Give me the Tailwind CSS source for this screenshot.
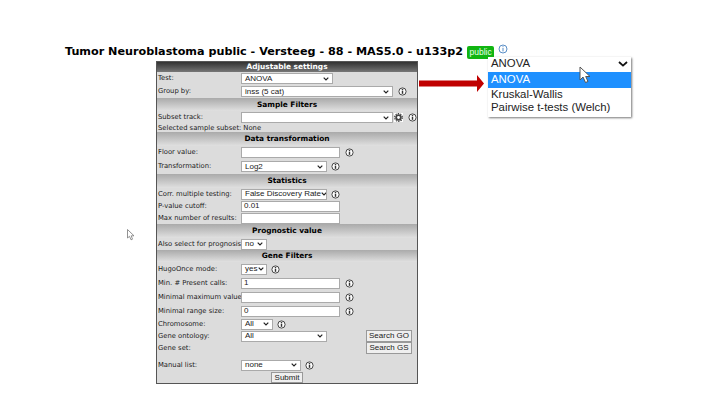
<!DOCTYPE html>
<html>
<head>
<meta charset="utf-8">
<script src="https://cdn.jsdelivr.net/npm/@tailwindcss/browser@4"></script>
</head>
<body class="bg-white overflow-hidden">
<div class="relative w-[720px] h-[416px] overflow-hidden font-['DejaVu_Sans',sans-serif] text-[6.8px] text-[#222]">

  <!-- Title line -->
  <div class="flex items-center h-[16px] mt-[44px] pl-[65px] absolute top-0 left-0">
    <span class="font-bold text-[11.2px] text-black whitespace-nowrap">Tumor Neuroblastoma public - Versteeg - 88 - MAS5.0 - u133p2</span>
    <span class="ml-[4px] bg-[#11b511] text-[#e8ffe8] rounded-[2px] w-[27px] text-center h-[13px] leading-[13px] text-[8.5px] font-['Liberation_Sans',sans-serif]">public</span>
    <svg class="ml-[4px] -mt-[6px]" width="10" height="10" viewBox="0 0 10 10"><circle cx="5" cy="5" r="4" fill="#fff" stroke="#5b8fc7"/><rect x="4.5" y="4" width="1" height="3.4" fill="#5b8fc7"/><rect x="4.500" y="2.200" width="1" height="1" fill="#5b8fc7"/></svg>
  </div>

  <!-- Settings panel -->
  <div class="absolute left-[156px] top-[61px] w-[262px] h-[323px] border border-[#555] bg-[#dcdcdc] flex flex-col">
    <div class="h-[10px] bg-gradient-to-b from-[#333] to-[#777] text-white font-bold text-[7.4px] text-center leading-[10px] shrink-0">Adjustable settings</div>

    <div class="flex items-center h-[13px] shrink-0"><span class="w-[84px] pl-[1px]">Test:</span>
      <div class="w-[92px] h-[11px] bg-white border border-[#aaa] flex items-center justify-between px-[3px] text-[8px] font-['Liberation_Sans',sans-serif]">ANOVA<svg width="6" height="4" viewBox="0 0 6 4"><path d="M.7.7 3 3 5.300.7" fill="none" stroke="#222" stroke-width="1.2"/></svg></div></div>
    <div class="flex items-center h-[13px] shrink-0"><span class="w-[84px] pl-[1px]">Group by:</span>
      <div class="w-[152px] h-[11px] bg-white border border-[#aaa] flex items-center justify-between px-[3px] text-[8px] font-['Liberation_Sans',sans-serif]">inss (5 cat)<svg width="6" height="4" viewBox="0 0 6 4"><path d="M.7.7 3 3 5.300.7" fill="none" stroke="#222" stroke-width="1.2"/></svg></div>
      <svg class="ml-[5px]" width="9" height="9" viewBox="0 0 10 10"><circle cx="5" cy="5" r="4" fill="#fff" stroke="#333"/><rect x="4.200" y="4" width="1.600" height="3.600" fill="#333"/><rect x="4.200" y="2.100" width="1.600" height="1.200" fill="#333"/></svg></div>

    <div class="h-[13px] shrink-0 bg-gradient-to-b from-[#aaa] to-[#e0e0e0] font-bold text-[7.4px] text-center leading-[13px] text-black">Sample Filters</div>
    <div class="flex items-center h-[13px] shrink-0"><span class="w-[84px] pl-[1px]">Subset track:</span>
      <div class="w-[152px] h-[11px] bg-white border border-[#aaa] flex items-center justify-end px-[3px]"><svg width="6" height="4" viewBox="0 0 6 4"><path d="M.7.7 3 3 5.300.7" fill="none" stroke="#222" stroke-width="1.2"/></svg></div>
      <svg class="ml-[1px] bg-white" width="9" height="9" viewBox="0 0 10 10"><circle cx="5" cy="5" r="2.600" fill="none" stroke="#444" stroke-width="2"/><circle cx="5" cy="5" r="4.300" fill="none" stroke="#444" stroke-width="1.300" stroke-dasharray="1.600 1.100"/></svg>
      <svg class="ml-[5px]" width="9" height="9" viewBox="0 0 10 10"><circle cx="5" cy="5" r="4" fill="#fff" stroke="#333"/><rect x="4.200" y="4" width="1.600" height="3.600" fill="#333"/><rect x="4.200" y="2.100" width="1.600" height="1.200" fill="#333"/></svg></div>
    <div class="flex items-center h-[8px] shrink-0 pl-[1px] whitespace-nowrap">Selected sample subset:<span class="ml-[2px]">None</span></div>

    <div class="h-[14px] shrink-0 bg-gradient-to-b from-[#aaa] to-[#e0e0e0] font-bold text-[7.4px] text-center leading-[14px] text-black">Data transformation</div>
    <div class="flex items-center h-[13px] shrink-0"><span class="w-[84px] pl-[1px]">Floor value:</span>
      <div class="w-[99px] h-[11px] bg-white border border-[#aaa]"></div>
      <svg class="ml-[5px]" width="9" height="9" viewBox="0 0 10 10"><circle cx="5" cy="5" r="4" fill="#fff" stroke="#333"/><rect x="4.200" y="4" width="1.600" height="3.600" fill="#333"/><rect x="4.200" y="2.100" width="1.600" height="1.200" fill="#333"/></svg></div>
    <div class="flex items-center h-[15px] shrink-0"><span class="w-[84px] pl-[1px]">Transformation:</span>
      <div class="w-[86px] h-[11px] bg-white border border-[#aaa] flex items-center justify-between px-[3px] text-[8px] font-['Liberation_Sans',sans-serif]">Log2<svg width="6" height="4" viewBox="0 0 6 4"><path d="M.7.7 3 3 5.300.7" fill="none" stroke="#222" stroke-width="1.2"/></svg></div>
      <svg class="ml-[4px]" width="9" height="9" viewBox="0 0 10 10"><circle cx="5" cy="5" r="4" fill="#fff" stroke="#333"/><rect x="4.200" y="4" width="1.600" height="3.600" fill="#333"/><rect x="4.200" y="2.100" width="1.600" height="1.200" fill="#333"/></svg></div>

    <div class="h-[14px] shrink-0 bg-gradient-to-b from-[#aaa] to-[#e0e0e0] font-bold text-[7.4px] text-center leading-[14px] text-black">Statistics</div>
    <div class="flex items-center h-[12px] shrink-0"><span class="w-[84px] pl-[1px] whitespace-nowrap">Corr. multiple testing:</span>
      <div class="w-[86px] h-[11px] bg-white border border-[#aaa] flex items-center justify-between px-[3px] text-[8px] font-['Liberation_Sans',sans-serif] whitespace-nowrap overflow-hidden">False Discovery Rate<svg class="shrink-0" width="6" height="4" viewBox="0 0 6 4"><path d="M.7.7 3 3 5.300.7" fill="none" stroke="#222" stroke-width="1.2"/></svg></div>
      <svg class="ml-[4px]" width="9" height="9" viewBox="0 0 10 10"><circle cx="5" cy="5" r="4" fill="#fff" stroke="#333"/><rect x="4.200" y="4" width="1.600" height="3.600" fill="#333"/><rect x="4.200" y="2.100" width="1.600" height="1.200" fill="#333"/></svg></div>
    <div class="flex items-center h-[12px] shrink-0"><span class="w-[84px] pl-[1px]">P-value cutoff:</span>
      <div class="w-[99px] h-[11px] bg-white border border-[#aaa] px-[2px] flex items-center text-[8px] font-['Liberation_Sans',sans-serif]">0.01</div></div>
    <div class="flex items-center h-[12px] shrink-0"><span class="w-[84px] pl-[1px] whitespace-nowrap">Max number of results:</span>
      <div class="w-[99px] h-[11px] bg-white border border-[#aaa]"></div></div>

    <div class="h-[14px] shrink-0 bg-gradient-to-b from-[#aaa] to-[#e0e0e0] font-bold text-[7.4px] text-center leading-[14px] text-black">Prognostic value</div>
    <div class="flex items-center h-[12px] shrink-0"><span class="w-[84px] pl-[1px] whitespace-nowrap">Also select for prognosis:</span>
      <div class="w-[26px] h-[11px] bg-white border border-[#aaa] flex items-center justify-between px-[3px] text-[8px] font-['Liberation_Sans',sans-serif]">no<svg width="6" height="4" viewBox="0 0 6 4"><path d="M.7.7 3 3 5.300.7" fill="none" stroke="#222" stroke-width="1.2"/></svg></div></div>

    <div class="h-[12px] shrink-0 bg-gradient-to-b from-[#aaa] to-[#e0e0e0] font-bold text-[7.4px] text-center leading-[12px] text-black">Gene Filters</div>
    <div class="flex items-center h-[14px] shrink-0"><span class="w-[84px] pl-[1px]">HugoOnce mode:</span>
      <div class="w-[26px] h-[11px] bg-white border border-[#aaa] flex items-center justify-between pl-[3px] pr-[2px] text-[8px] font-['Liberation_Sans',sans-serif]">yes<svg width="6" height="4" viewBox="0 0 6 4"><path d="M.7.7 3 3 5.300.7" fill="none" stroke="#222" stroke-width="1.2"/></svg></div>
      <svg class="ml-[4px]" width="9" height="9" viewBox="0 0 10 10"><circle cx="5" cy="5" r="4" fill="#fff" stroke="#333"/><rect x="4.200" y="4" width="1.600" height="3.600" fill="#333"/><rect x="4.200" y="2.100" width="1.600" height="1.200" fill="#333"/></svg></div>
    <div class="flex items-center h-[14px] shrink-0"><span class="w-[84px] pl-[1px] whitespace-nowrap">Min. # Present calls:</span>
      <div class="w-[99px] h-[11px] bg-white border border-[#aaa] px-[2px] flex items-center text-[8px] font-['Liberation_Sans',sans-serif]">1</div>
      <svg class="ml-[5px]" width="9" height="9" viewBox="0 0 10 10"><circle cx="5" cy="5" r="4" fill="#fff" stroke="#333"/><rect x="4.200" y="4" width="1.600" height="3.600" fill="#333"/><rect x="4.200" y="2.100" width="1.600" height="1.200" fill="#333"/></svg></div>
    <div class="flex items-center h-[14px] shrink-0"><span class="w-[84px] pl-[1px] whitespace-nowrap">Minimal maximum value:</span>
      <div class="w-[99px] h-[11px] bg-white border border-[#aaa]"></div>
      <svg class="ml-[5px]" width="9" height="9" viewBox="0 0 10 10"><circle cx="5" cy="5" r="4" fill="#fff" stroke="#333"/><rect x="4.200" y="4" width="1.600" height="3.600" fill="#333"/><rect x="4.200" y="2.100" width="1.600" height="1.200" fill="#333"/></svg></div>
    <div class="flex items-center h-[14px] shrink-0"><span class="w-[84px] pl-[1px] whitespace-nowrap">Minimal range size:</span>
      <div class="w-[99px] h-[11px] bg-white border border-[#aaa] px-[2px] flex items-center text-[8px] font-['Liberation_Sans',sans-serif]">0</div>
      <svg class="ml-[5px]" width="9" height="9" viewBox="0 0 10 10"><circle cx="5" cy="5" r="4" fill="#fff" stroke="#333"/><rect x="4.200" y="4" width="1.600" height="3.600" fill="#333"/><rect x="4.200" y="2.100" width="1.600" height="1.200" fill="#333"/></svg></div>
    <div class="flex items-center h-[12px] shrink-0"><span class="w-[84px] pl-[1px]">Chromosome:</span>
      <div class="w-[32px] h-[11px] bg-white border border-[#aaa] flex items-center justify-between px-[3px] text-[8px] font-['Liberation_Sans',sans-serif]">All<svg width="6" height="4" viewBox="0 0 6 4"><path d="M.7.7 3 3 5.300.7" fill="none" stroke="#222" stroke-width="1.2"/></svg></div>
      <svg class="ml-[4px]" width="9" height="9" viewBox="0 0 10 10"><circle cx="5" cy="5" r="4" fill="#fff" stroke="#333"/><rect x="4.200" y="4" width="1.600" height="3.600" fill="#333"/><rect x="4.200" y="2.100" width="1.600" height="1.200" fill="#333"/></svg></div>
    <div class="flex items-center h-[12px] shrink-0"><span class="w-[84px] pl-[1px]">Gene ontology:</span>
      <div class="w-[86px] h-[11px] bg-white border border-[#aaa] flex items-center justify-between px-[3px] text-[8px] font-['Liberation_Sans',sans-serif]">All<svg width="6" height="4" viewBox="0 0 6 4"><path d="M.7.7 3 3 5.300.7" fill="none" stroke="#222" stroke-width="1.2"/></svg></div>
      <div class="ml-[39px] w-[46px] h-[12px] bg-[#efefef] border border-[#999] text-center leading-[10px] text-[8px] font-['Liberation_Sans',sans-serif]">Search GO</div></div>
    <div class="flex items-center h-[12px] shrink-0"><span class="w-[84px] pl-[1px]">Gene set:</span>
      <div class="ml-[125px] w-[46px] h-[12px] bg-[#efefef] border border-[#999] text-center leading-[10px] text-[8px] font-['Liberation_Sans',sans-serif]">Search GS</div></div>
    <div class="h-[5px] shrink-0"></div>
    <div class="flex items-center h-[12px] shrink-0"><span class="w-[84px] pl-[1px]">Manual list:</span>
      <div class="w-[60px] h-[11px] bg-white border border-[#aaa] flex items-center justify-between px-[3px] text-[8px] font-['Liberation_Sans',sans-serif]">none<svg width="6" height="4" viewBox="0 0 6 4"><path d="M.7.7 3 3 5.300.7" fill="none" stroke="#222" stroke-width="1.2"/></svg></div>
      <svg class="ml-[4px]" width="9" height="9" viewBox="0 0 10 10"><circle cx="5" cy="5" r="4" fill="#fff" stroke="#333"/><rect x="4.200" y="4" width="1.600" height="3.600" fill="#333"/><rect x="4.200" y="2.100" width="1.600" height="1.200" fill="#333"/></svg></div>
    <div class="flex justify-center items-center h-[12px] shrink-0"><div class="w-[32px] h-[11px] bg-[#efefef] border border-[#999] text-center leading-[9px] text-[8px] font-['Liberation_Sans',sans-serif]">Submit</div></div>
  </div>

  <!-- Red arrow -->
  <svg class="absolute left-[419px] top-[75px]" width="65" height="17" viewBox="0 0 65 17"><path d="M0 5.500H58V0L65 8.500 58 17V11.500H0Z" fill="#c00000"/></svg>

  <!-- Dropdown overlay -->
  <div class="absolute left-[488px] top-[57px] w-[143px] h-[60px] bg-white shadow-[1px_1px_2px_#777] font-['Liberation_Sans',sans-serif] text-[11.4px] text-[#222]">
    <div class="h-[15px] flex items-center justify-between pl-[3px] pr-[3px] pb-[2px] leading-none">ANOVA<svg width="10" height="6" viewBox="0 0 10 6"><path d="M1 1 5 4.600 9 1" fill="none" stroke="#111" stroke-width="1.800"/></svg></div>
    <div class="h-[16px] bg-[#1e90ff] text-white flex items-center pl-[3px] leading-none">ANOVA</div>
    <div class="h-[13px] flex items-center pl-[3px] leading-none">Kruskal-Wallis</div>
    <div class="h-[14px] flex items-center pl-[3px] leading-none">Pairwise t-tests (Welch)</div>
  </div>

  <!-- Cursors -->
  <svg class="absolute left-[579px] top-[66px]" width="13" height="18" viewBox="0 0 13 18"><path d="M1 1V14L4 11 6.500 16.500 9 15.500 6.700 10.500H11Z" fill="#fff" stroke="#555" stroke-width="1"/></svg>
  <svg class="absolute left-[127px] top-[229px]" width="9" height="12" viewBox="0 0 9 12"><path d="M.5.500V9L2.500 7.300 4 10.800 5.500 10.200 4.200 6.800H7Z" fill="#fff" stroke="#777" stroke-width=".8"/></svg>
</div>
</body>
</html>
